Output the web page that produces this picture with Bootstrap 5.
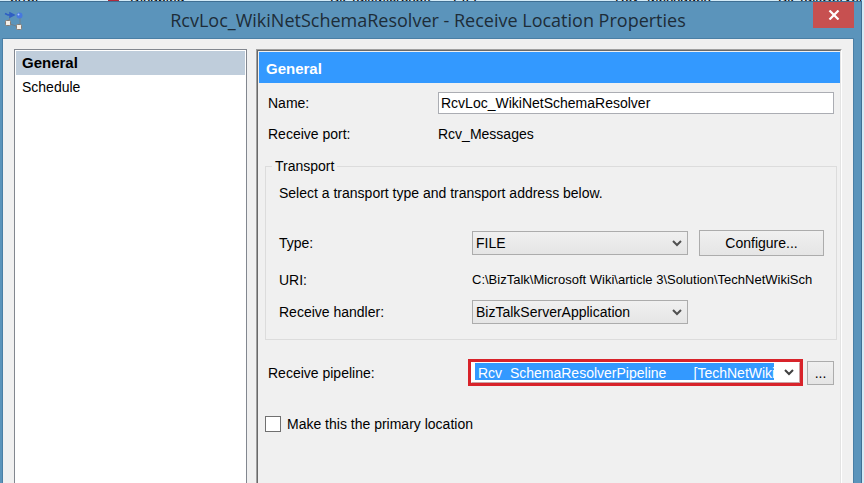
<!DOCTYPE html>
<html lang="en">
<head>
<meta charset="utf-8">
<meta name="viewport" content="width=device-width, initial-scale=1">
<title>RcvLoc_WikiNetSchemaResolver - Receive Location Properties</title>
<link href="https://cdn.jsdelivr.net/npm/bootstrap@5.3.0/dist/css/bootstrap.min.css" rel="stylesheet">
<style>
  body { font: 14px/18px "Liberation Sans", Arial, sans-serif; color: #000; background: #d4ebf7; }
  /* list window behind the dialog */
  .behind { height: 1px; line-height: 8px; display: grid; grid-template: 1px / 10px 98px 22px 200px 123px 162px 163px 1fr; align-items: end; white-space: nowrap; }
  .behind .stop { width: 11px; height: 8px; background: #b02a3c; }
  .dialog { background: #5b94bb; border: 1px solid #3f6f93; border-width: 1px 1px 0 0; padding: 0 7px 0 2px; margin-right: 2px; }
  .titlebar { height: 36px; }
  .titlebar h1 { font: 18px/36px "Open Sans", "Segoe UI", sans-serif; color: #1d2c38; }
  .app-icon { left: 1px; top: 9px; }
  .close-btn { right: 0; top: 0; width: 41px; height: 26px; background: #c75050; border: 0; }
  .client { background: #f0f0f0; border: 1px solid #4a7fa5; border-bottom: 0; padding: 10px 11px 0 11px; gap: 9px; }
  .nav-pane { width: 233px; background: #fff; border: 1px solid #82878f; border-bottom: 0; padding: 1px; }
  .nav-pane a { color: #000; padding: 3px 6px; height: 24px; }
  .nav-pane a.active { background: #bfcddb; font-weight: bold; font-size: 15px; }
  .props { min-width: 0; border: 1px solid #a0a0a0; border-right-color: #fff; border-bottom: 0; }
  .props-inner { border: 1px solid #696969; border-right-color: #e3e3e3; border-bottom: 0; padding: 1px 0 0 1px; }
  .props h2 { font-size: 15px; line-height: 18px; font-weight: bold; color: #fff; background: #3399ff; padding: 8px 7px 5px; }
  .fields { padding: 9px 3px 0 6px; }
  .lbl-main { width: 170px; }
  .lbl-group { width: 193px; }
  .lbl-pipe { width: 200px; }
  .inset { padding: 0 3px; }
  .form-control, .form-select { font-size: 14px; line-height: 18px; border-radius: 0; color: #000; min-height: 0; }
  .form-control { height: 22px; padding: 0 2px; border-color: #abadb3; }
  .form-select {
    width: 216px; height: 24px; padding: 0 20px 0 3px; border-color: #acacac;
    background: url("data:image/svg+xml,%3Csvg xmlns='http://www.w3.org/2000/svg' viewBox='0 0 10 7'%3E%3Cpath d='M1 1l4 4 4-4' fill='none' stroke='%23505050' stroke-width='2'/%3E%3C/svg%3E") no-repeat right 5px center / 10px 7px,
      linear-gradient(#f0f0f0, #e5e5e5);
  }
  .push { font-size: 14px; line-height: 18px; border-radius: 0; border: 1px solid #acacac; color: #000; background: linear-gradient(#f0f0f0, #e5e5e5); padding: 0; }
  .push-wide { width: 125px; height: 26px; }
  .push-dots { width: 27px; height: 24px; }
  .row-port { margin-top: 11px; }
  .group-box { margin-top: 15px; border: 1px solid #dcdcdc; padding: 9px 12px 15px 13px; min-width: 0; }
  .group-box legend { float: none; width: auto; margin: 0 0 0 -7px; padding: 0 3px; font-size: 14px; line-height: 17px; }
  .row-type { margin-top: 28px; }
  .row-uri { margin-top: 15px; }
  .uri-text { font-size: 13px; }
  .row-handler { margin-top: 11px; }
  .row-pipe { margin-top: 19px; }
  .row-primary { margin-top: 29px; gap: 6px; }
  .callout { border: 3px solid #d8232a; min-width: 0; }
  .callout .form-select {
    width: 100%; min-width: 0; height: 21px; color: #fff; padding: 0 25px 0 6px; border-color: #fff #c9a3a5 #c9a3a5 #fff;
    background: url("data:image/svg+xml,%3Csvg xmlns='http://www.w3.org/2000/svg' viewBox='0 0 10 7'%3E%3Cpath d='M1 1l4 4 4-4' fill='none' stroke='%23404040' stroke-width='2'/%3E%3C/svg%3E") no-repeat right 5px center / 10px 7px,
      linear-gradient(#3399ff, #3399ff) no-repeat 3px 0 / calc(100% - 28px) 17px #fff;
  }
  .form-check-input.primary-box { width: 16px; height: 16px; margin: 0; border: 1px solid #707070; border-radius: 0; background-color: #fff; }
</style>
</head>
<body class="vh-100 overflow-hidden d-flex flex-column">
<div class="behind overflow-hidden flex-shrink-0" aria-hidden="true">
  <span></span><span>error</span><span class="stop"></span><span>Disabled</span><span>BizTalkMicrosoft</span><span>FILE</span><span>Rcv_Messages</span><span>BizTalkServer</span>
</div>
<main class="dialog flex-grow-1 d-flex flex-column">
  <header class="titlebar position-relative d-flex justify-content-center">
    <svg class="app-icon position-absolute" width="22" height="22" viewBox="0 0 22 22" aria-hidden="true">
      <path d="M7 13l9 3M17 7v8M5 13l2-7" stroke="#71808c" stroke-width="1" fill="none"/>
      <path d="M2 2.500l3 1.500h3M7 2l4 2-4 2z" stroke="#2f5fc4" stroke-width="1.500" fill="#2f5fc4"/>
      <circle cx="16.500" cy="4.500" r="3" fill="#4778df"/><circle cx="15.500" cy="3.500" r="1" fill="#a9c4ff"/>
      <rect x="2.500" y="9.500" width="5" height="5" rx="1" fill="#f3efe9" stroke="#857c74"/>
      <rect x="13.500" y="13.500" width="5" height="5" rx="1" fill="#f3efe9" stroke="#857c74"/>
    </svg>
    <h1 class="m-0">RcvLoc_WikiNetSchemaResolver - Receive Location Properties</h1>
    <button type="button" class="close-btn position-absolute p-0 d-flex align-items-center justify-content-center" aria-label="Close">
      <svg width="12" height="10" viewBox="0 0 12 10" aria-hidden="true"><path d="M1.500 .5l9 9M10.500 .5l-9 9" stroke="#fff" stroke-width="2.200"/></svg>
    </button>
  </header>
  <div class="client flex-grow-1 d-flex">
    <nav class="nav-pane flex-shrink-0 d-flex flex-column">
      <a href="#general" class="active text-decoration-none" aria-current="page">General</a>
      <a href="#schedule" class="text-decoration-none">Schedule</a>
    </nav>
    <section class="props flex-grow-1 d-flex" id="general">
      <div class="props-inner flex-grow-1 w-100">
        <h2 class="m-0">General</h2>
        <form class="fields">
          <div class="inset d-flex align-items-center">
            <label class="lbl-main flex-shrink-0" for="name">Name:</label>
            <input class="form-control" id="name" type="text" value="RcvLoc_WikiNetSchemaResolver">
          </div>
          <div class="inset row-port d-flex">
            <span class="lbl-main">Receive port:</span><span>Rcv_Messages</span>
          </div>
          <fieldset class="group-box">
            <legend>Transport</legend>
            <div>Select a transport type and transport address below.</div>
            <div class="row-type d-flex align-items-center">
              <label class="lbl-group flex-shrink-0" for="type">Type:</label>
              <select class="form-select" id="type"><option>FILE</option></select>
              <button type="button" class="btn push push-wide ms-auto">Configure...</button>
            </div>
            <div class="row-uri d-flex">
              <span class="lbl-group flex-shrink-0">URI:</span>
              <span class="uri-text overflow-hidden text-nowrap">C:\BizTalk\Microsoft Wiki\article 3\Solution\TechNetWikiSch</span>
            </div>
            <div class="row-handler d-flex align-items-center">
              <label class="lbl-group flex-shrink-0" for="handler">Receive handler:</label>
              <select class="form-select" id="handler"><option>BizTalkServerApplication</option></select>
            </div>
          </fieldset>
          <div class="inset row-pipe d-flex align-items-center">
            <label class="lbl-pipe flex-shrink-0" for="pipeline">Receive pipeline:</label>
            <div class="callout flex-grow-1 d-flex">
              <select class="form-select" id="pipeline"><option>Rcv_SchemaResolverPipeline&nbsp;&nbsp;&nbsp;&nbsp;&nbsp;&nbsp; [TechNetWiki]</option></select>
            </div>
            <button type="button" class="btn push push-dots ms-1 flex-shrink-0" aria-label="Browse pipeline">...</button>
          </div>
          <div class="row-primary d-flex align-items-center">
            <input class="form-check-input primary-box" type="checkbox" id="primary">
            <label for="primary">Make this the primary location</label>
          </div>
        </form>
      </div>
    </section>
  </div>
</main>
<script src="https://cdn.jsdelivr.net/npm/bootstrap@5.3.0/dist/js/bootstrap.bundle.min.js"></script>
</body>
</html>
